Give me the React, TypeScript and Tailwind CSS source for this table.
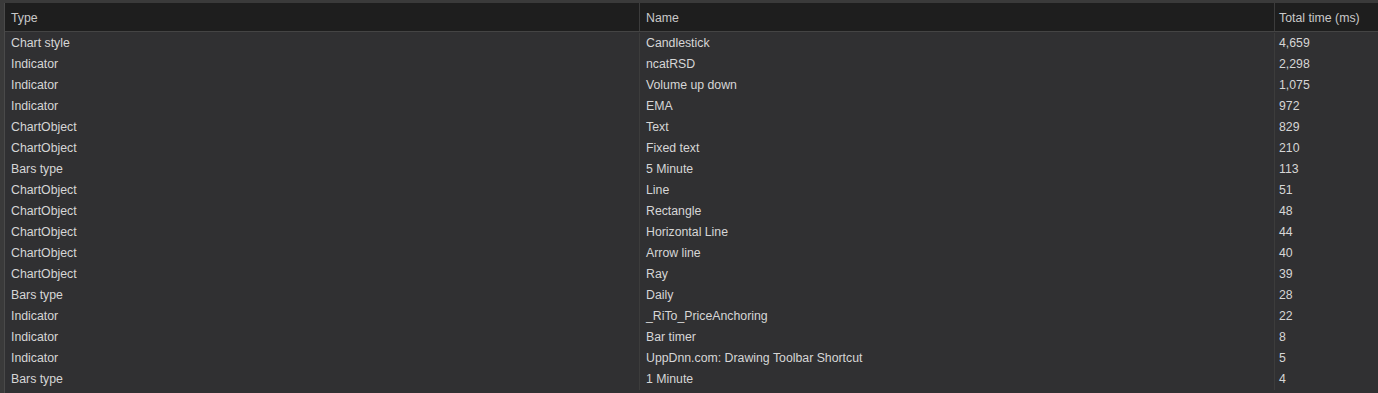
import React from "react";

const rows: [string, string, string][] = [
  ["Chart style", "Candlestick", "4,659"],
  ["Indicator", "ncatRSD", "2,298"],
  ["Indicator", "Volume up down", "1,075"],
  ["Indicator", "EMA", "972"],
  ["ChartObject", "Text", "829"],
  ["ChartObject", "Fixed text", "210"],
  ["Bars type", "5 Minute", "113"],
  ["ChartObject", "Line", "51"],
  ["ChartObject", "Rectangle", "48"],
  ["ChartObject", "Horizontal Line", "44"],
  ["ChartObject", "Arrow line", "40"],
  ["ChartObject", "Ray", "39"],
  ["Bars type", "Daily", "28"],
  ["Indicator", "_RiTo_PriceAnchoring", "22"],
  ["Indicator", "Bar timer", "8"],
  ["Indicator", "UppDnn.com: Drawing Toolbar Shortcut", "5"],
  ["Bars type", "1 Minute", "4"],
];

export default function App() {
  return (
    <div
      className="w-[1378px] h-[393px] bg-[#3a3a3a] pt-[3px] overflow-hidden text-[12.3px] text-[#d6d6d6]"
      style={{ fontFamily: "Tahoma, 'Liberation Sans', 'DejaVu Sans', sans-serif" }}
    >
      <div className="ml-[4px] h-[390px] bg-[#303032] border-l border-[#4a4a4a]">
        <div className="grid grid-cols-[634px_635px_1fr] h-[29px] bg-[#1e1e1e] border-b border-[#444]">
          <div className="pl-[6px] pt-[3px] flex items-center text-[#c9c9c9]">Type</div>
          <div className="pl-[6px] pt-[3px] flex items-center border-l border-[#3c3c3c] text-[#c9c9c9]">Name</div>
          <div className="pl-[4px] pt-[3px] flex items-center border-l border-[#3c3c3c] text-[#c9c9c9]">Total time (ms)</div>
        </div>
        <div className="grid grid-cols-[634px_635px_1fr] pt-[1px]">
          <div className="flex flex-col">
            {rows.map((r, i) => (
              <div key={i} className="h-[21px] pl-[6px] flex items-center">{r[0]}</div>
            ))}
          </div>
          <div className="flex flex-col border-l border-[#3c3c3c]">
            {rows.map((r, i) => (
              <div key={i} className="h-[21px] pl-[6px] flex items-center">{r[1]}</div>
            ))}
          </div>
          <div className="flex flex-col border-l border-[#3c3c3c]">
            {rows.map((r, i) => (
              <div key={i} className="h-[21px] pl-[4px] flex items-center">{r[2]}</div>
            ))}
          </div>
        </div>
      </div>
    </div>
  );
}
